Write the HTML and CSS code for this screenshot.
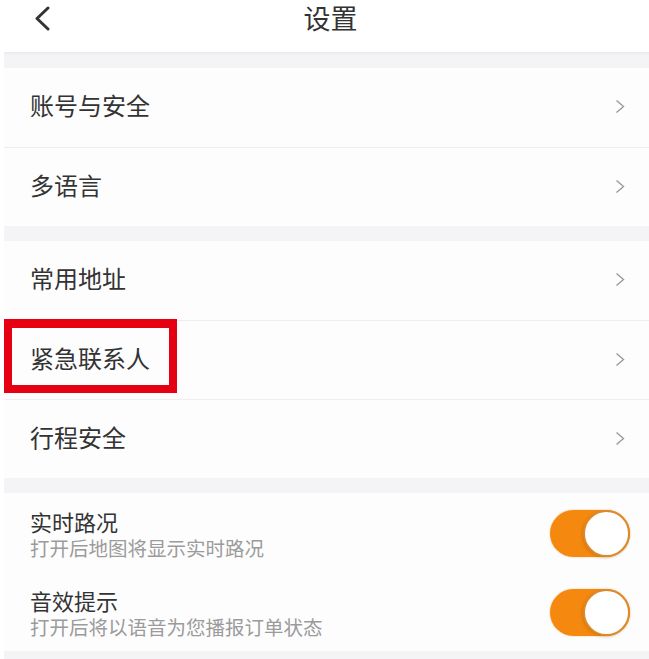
FILE: index.html
```html
<!DOCTYPE html>
<html lang="zh-CN">
<head>
<meta charset="utf-8">
<title>设置</title>
<link rel="stylesheet" href="styles.css">
</head>
<body>
<header class="topbar">
  <span class="back">
    <svg width="16" height="25" viewBox="0 0 16 25"><path d="M14 2 L3 12.5 L14 23" fill="none" stroke="#333" stroke-width="3" stroke-linecap="round" stroke-linejoin="round"/></svg>
  </span>
  <h1 class="title">设置</h1>
</header>
<main class="content">
  <section class="group">
    <div class="row"><span class="label">账号与安全</span><svg class="arrow" width="10" height="15" viewBox="0 0 10 15"><path d="M1.5 1.5 L8.5 7.5 L1.5 13.5" fill="none" stroke="#9a9a9a" stroke-width="1.4"/></svg></div>
    <div class="row"><span class="label">多语言</span><svg class="arrow" width="10" height="15" viewBox="0 0 10 15"><path d="M1.5 1.5 L8.5 7.5 L1.5 13.5" fill="none" stroke="#9a9a9a" stroke-width="1.4"/></svg></div>
  </section>
  <section class="group">
    <div class="row"><span class="label">常用地址</span><svg class="arrow" width="10" height="15" viewBox="0 0 10 15"><path d="M1.5 1.5 L8.5 7.5 L1.5 13.5" fill="none" stroke="#9a9a9a" stroke-width="1.4"/></svg></div>
    <div class="row marked"><span class="label">紧急联系人</span><svg class="arrow" width="10" height="15" viewBox="0 0 10 15"><path d="M1.5 1.5 L8.5 7.5 L1.5 13.5" fill="none" stroke="#9a9a9a" stroke-width="1.4"/></svg><span class="highlight"></span></div>
    <div class="row"><span class="label">行程安全</span><svg class="arrow" width="10" height="15" viewBox="0 0 10 15"><path d="M1.5 1.5 L8.5 7.5 L1.5 13.5" fill="none" stroke="#9a9a9a" stroke-width="1.4"/></svg></div>
  </section>
  <section class="group">
    <div class="row switch-row">
      <div class="texts">
        <span class="sw-title">实时路况</span>
        <span class="sw-sub">打开后地图将显示实时路况</span>
      </div>
      <span class="toggle"><span class="knob"></span></span>
    </div>
    <div class="row switch-row">
      <div class="texts">
        <span class="sw-title">音效提示</span>
        <span class="sw-sub">打开后将以语音为您播报订单状态</span>
      </div>
      <span class="toggle"><span class="knob"></span></span>
    </div>
  </section>
</main>
</body>
</html>
```

FILE: styles.css
```css
* { box-sizing: border-box; }
html, body {
  margin: 0;
  padding: 0;
  background: #ffffff;
  font-family: "Noto Sans CJK SC", "Noto Sans", sans-serif;
  color: #333333;
}
body { width: 649px; height: 659px; overflow: hidden; }

.topbar {
  position: relative;
  height: 52px;
  background: #ffffff;
  display: flex;
  align-items: flex-start;
  justify-content: center;
  padding-left: 12px;
  z-index: 1;
}
.back {
  position: absolute;
  left: 34px;
  top: 6px;
  display: flex;
}
.title {
  margin: 0;
  padding-top: 1px;
  font-size: 27px;
  font-weight: 400;
  line-height: 34px;
  color: #333;
}

.content {
  margin-left: 4px;
  background: #f4f4f6;
  padding-top: 16px;
  box-shadow: inset 0 3px 3px -2px rgba(0,0,0,0.06);
  display: flex;
  flex-direction: column;
  gap: 15px;
  height: 607px;
}
.group { background: #fdfdfe; }

.row {
  position: relative;
  height: 79px;
  display: flex;
  align-items: center;
  justify-content: space-between;
  padding: 0 24px 5px 26px;
  border-top: 1px solid #eeeef0;
}
.row:first-child { border-top: none; }

.label {
  font-size: 24px;
  line-height: 30px;
  color: #333;
}
.arrow { display: block; margin-top: 3px; }

.highlight {
  position: absolute;
  left: 0;
  top: -2px;
  width: 173px;
  height: 74px;
  border: 8px solid #e50012;
  border-top-width: 9px;
}

.switch-row { padding-top: 2px; padding-bottom: 0; border-top: none; }
.texts {
  display: flex;
  flex-direction: column;
}
.sw-title {
  font-size: 22px;
  line-height: 28px;
  color: #333;
}
.sw-sub {
  font-size: 19.5px;
  line-height: 26px;
  color: #9b9b9b;
}
.toggle {
  width: 80px;
  height: 47px;
  border-radius: 24px;
  background: #f5890f;
  display: flex;
  justify-content: flex-end;
  align-items: center;
  margin-right: -5px;
  box-shadow: 0 0 2px rgba(230,140,30,0.5);
}
.knob {
  width: 47px;
  height: 47px;
  border-radius: 50%;
  background: #ffffff;
  border: 2px solid #dc8a2c;
  box-shadow: -1px 1px 3px rgba(120,70,0,0.25);
}
```
